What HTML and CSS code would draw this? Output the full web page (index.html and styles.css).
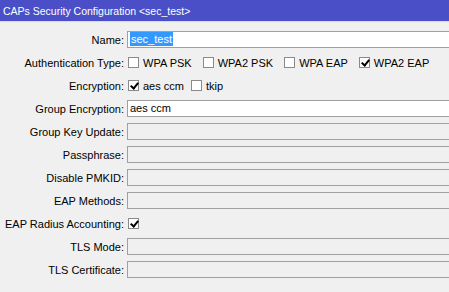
FILE: index.html
```html
<!DOCTYPE html>
<html lang="en">
<head>
  <meta charset="UTF-8">
  <title>CAPs Security Configuration</title>
  <link rel="stylesheet" href="styles.css">
</head>
<body>
<div class="titlebar">CAPs Security Configuration &lt;sec_test&gt;</div>
<div class="form">
  <div class="row">
    <label>Name:</label>
    <div class="field edit"><span class="selected">sec_test</span></div>
  </div>
  <div class="row">
    <label>Authentication Type:</label>
    <div class="checks">
      <span class="check"><span class="box"></span>WPA PSK</span>
      <span class="check"><span class="box"></span>WPA2 PSK</span>
      <span class="check"><span class="box"></span>WPA EAP</span>
      <span class="check"><span class="box on"></span>WPA2 EAP</span>
    </div>
  </div>
  <div class="row">
    <label>Encryption:</label>
    <div class="checks tight">
      <span class="check"><span class="box on"></span>aes ccm</span>
      <span class="check"><span class="box"></span>tkip</span>
    </div>
  </div>
  <div class="row">
    <label>Group Encryption:</label>
    <div class="field edit">aes ccm</div>
  </div>
  <div class="row">
    <label>Group Key Update:</label>
    <div class="field"></div>
  </div>
  <div class="row">
    <label>Passphrase:</label>
    <div class="field"></div>
  </div>
  <div class="row">
    <label>Disable PMKID:</label>
    <div class="field"></div>
  </div>
  <div class="row">
    <label>EAP Methods:</label>
    <div class="field"></div>
  </div>
  <div class="row">
    <label>EAP Radius Accounting:</label>
    <div class="checks">
      <span class="check"><span class="box on"></span></span>
    </div>
  </div>
  <div class="row">
    <label>TLS Mode:</label>
    <div class="field"></div>
  </div>
  <div class="row">
    <label>TLS Certificate:</label>
    <div class="field"></div>
  </div>
</div>
</body>
</html>
```

FILE: styles.css
```css
* {
  margin: 0;
  padding: 0;
  box-sizing: border-box;
}

body {
  font-family: 'Liberation Sans', Arial, sans-serif;
  font-size: 11px;
  background: #f0f0f0;
  color: #000;
  overflow: hidden;
}

.titlebar {
  height: 22px;
  background: #4a4fc8;
  color: #fff;
  font-size: 10.5px;
  line-height: 22px;
  padding-left: 3px;
  border-bottom: 1px solid #d8d8e8;
}

.form {
  padding-top: 6px;
}

.row {
  display: grid;
  grid-template-columns: 124px 1fr;
  column-gap: 3px;
  align-items: center;
  height: 23px;
}

.row label {
  text-align: right;
  white-space: nowrap;
}

.field {
  height: 17px;
  border: 1px solid #a0a0a0;
  border-right: none;
  background: #f0f0f0;
  line-height: 15px;
  padding-left: 2px;
}

.field.edit {
  background: #fff;
}

.selected {
  background: #3399ff;
  color: #fff;
  padding: 1px 1px;
}

.checks {
  display: flex;
  align-items: center;
}

.check {
  display: flex;
  align-items: center;
  margin-right: 10px;
}

.checks.tight .check {
  margin-right: 6px;
}

.box {
  width: 11px;
  height: 11px;
  border: 1px solid #8a8a8a;
  background: #fff;
  margin: 0 4px 0 1px;
  position: relative;
}

.box.on::after {
  content: "";
  position: absolute;
  left: 3px;
  top: 0px;
  width: 3px;
  height: 6px;
  border: solid #000;
  border-width: 0 2px 2px 0;
  transform: rotate(40deg);
}
```
